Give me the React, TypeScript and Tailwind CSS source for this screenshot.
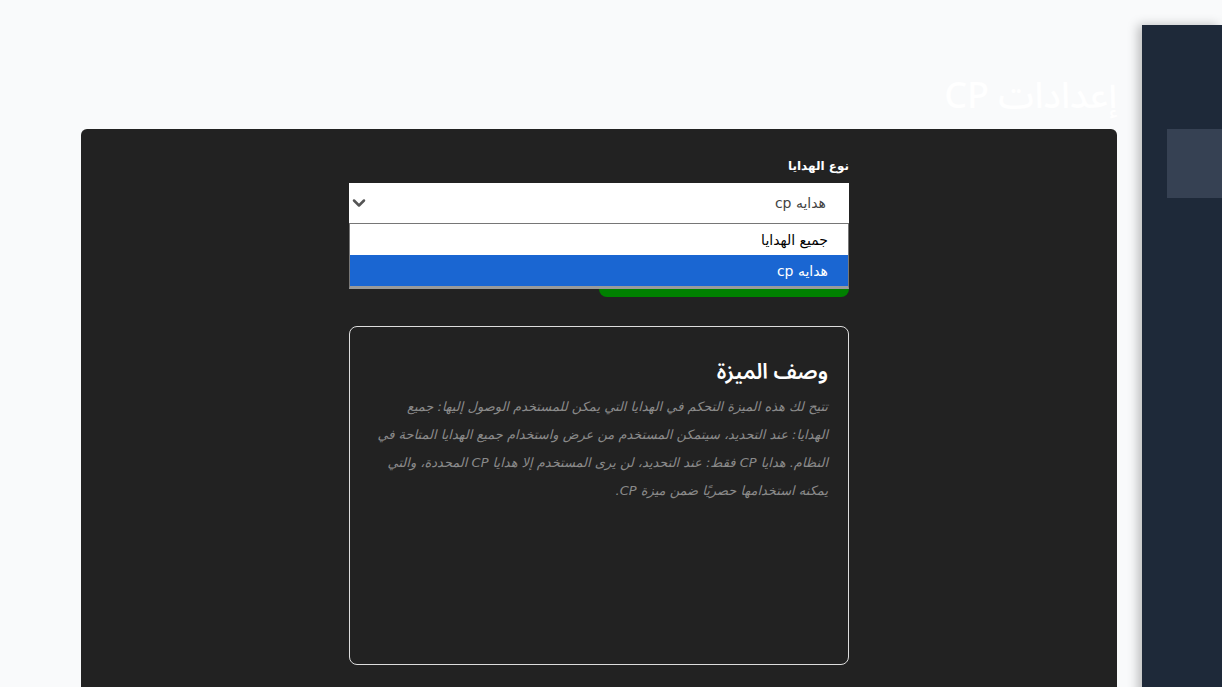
import { ChevronDown } from "lucide-react";

const dejavu = { fontFamily: '"DejaVu Sans", sans-serif' };
const noto = { fontFamily: '"Noto Sans", "Noto Sans Arabic", "Noto Sans Arabic UI", sans-serif' };

function GiftSelect() {
  return (
    <div className="relative">
      <div className="flex h-10 items-center justify-between bg-white pr-[23px] pl-0">
        <span className="text-sm text-[#444]" style={dejavu}>
          هدايه cp
        </span>
        <ChevronDown className="h-5 w-5 text-[#555]" strokeWidth={3} />
      </div>
      {/* open native list */}
      <div className="absolute top-10 right-0 left-0 z-10 border border-[#767676] border-b-[3px] border-b-[#9a9a9a] bg-white">
        <div className="flex h-[31px] items-center pr-[20px] text-sm text-black" style={dejavu}>
          جميع الهدايا
        </div>
        <div className="flex h-[31px] items-center bg-[#1a66d2] pr-[20px] text-sm text-white" style={dejavu}>
          هدايه cp
        </div>
      </div>
    </div>
  );
}

export default function App() {
  return (
    <div className="flex min-h-[687px] overflow-hidden bg-gray-50" dir="rtl">
      <aside className="mt-[25px] w-[80px] shrink-0 bg-gray-800 pt-[104px] pl-[25px] shadow-[-4px_0_10px_rgba(0,0,0,0.25)]">
        <div className="h-[69px] bg-gray-700" />
      </aside>
      <main className="flex-1 pr-[25px] pl-[81px]">
        <h1 className="mt-[74px] mb-[13px] h-[42px] text-4xl leading-[42px] font-medium text-white" style={noto}>
          إعدادات CP
        </h1>
        <section className="min-h-[560px] rounded-md bg-[#222222] pt-[28px] pb-10">
          <div className="mx-auto w-[500px]">
            <label className="mb-[8px] block text-xs leading-[18px] font-bold text-white" style={dejavu}>
              نوع الهدايا
            </label>
            <GiftSelect />
            <button className="mt-10 h-[34px] w-[250px] rounded-lg bg-[#008000] text-sm text-white">
              حفظ
            </button>
            <div className="mt-[29px] h-[339px] rounded-lg border border-[#dddddd] px-5 pt-[30px]">
              <h2 className="text-[21.5px] leading-7 font-semibold text-white" style={noto}>
                وصف الميزة
              </h2>
              <p className="mt-[8px] text-[13px] leading-[28px] text-[#8a8a8a] italic" style={dejavu}>
                تتيح لك هذه الميزة التحكم في الهدايا التي يمكن للمستخدم الوصول إليها: جميع الهدايا: عند التحديد، سيتمكن المستخدم من عرض واستخدام جميع الهدايا المتاحة في النظام. هدايا CP فقط: عند التحديد، لن يرى المستخدم إلا هدايا CP المحددة، والتي يمكنه استخدامها حصريًا ضمن ميزة CP.
              </p>
            </div>
          </div>
        </section>
      </main>
    </div>
  );
}
